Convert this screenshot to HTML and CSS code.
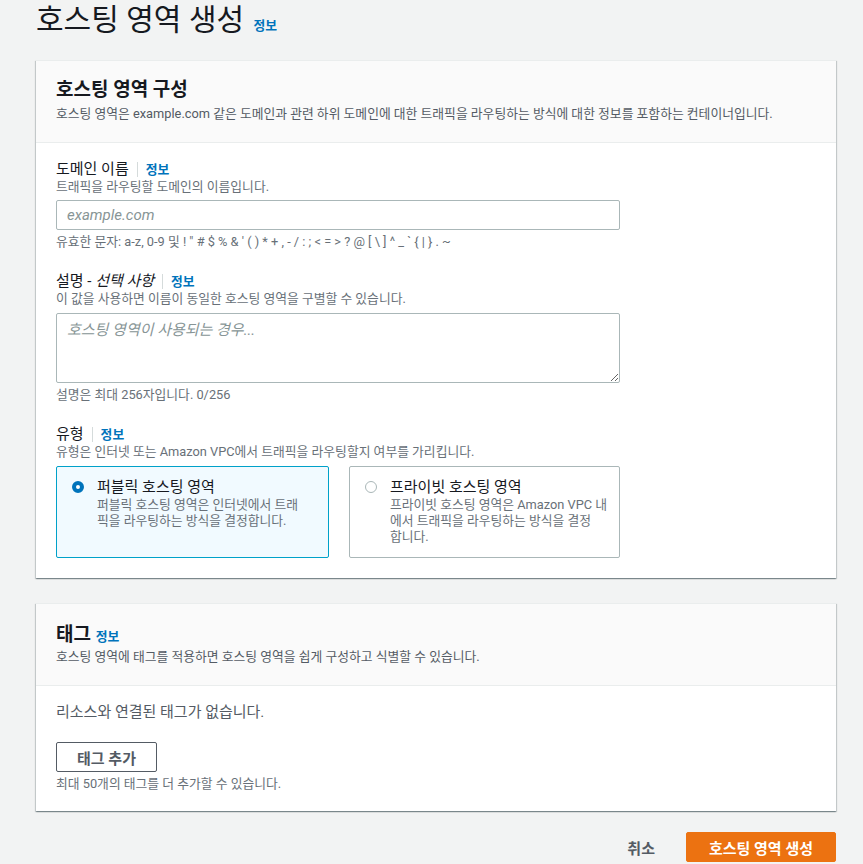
FILE: index.html
```html
<!DOCTYPE html>
<html lang="ko">
<head>
    <meta charset="UTF-8">
    <meta name="viewport" content="width=device-width, initial-scale=1.0">
    <title>호스팅 영역 생성</title>
    <link rel="stylesheet" href="styles.css">
</head>
<body>
    <div class="page">
        <h1 class="page-title">호스팅 영역 생성 <a class="info-link" href="#">정보</a></h1>

        <div class="panel">
            <div class="panel-header">
                <h2>호스팅 영역 구성</h2>
                <p class="panel-desc">호스팅 영역은 example.com 같은 도메인과 관련 하위 도메인에 대한 트래픽을 라우팅하는 방식에 대한 정보를 포함하는 컨테이너입니다.</p>
            </div>
            <div class="panel-body">
                <div class="field">
                    <div class="field-label">도메인 이름<a class="info-link sep" href="#">정보</a></div>
                    <div class="field-desc">트래픽을 라우팅할 도메인의 이름입니다.</div>
                    <input class="text-input" type="text" placeholder="example.com">
                    <div class="field-hint">유효한 문자: a-z, 0-9 및 ! " # $ % &amp; ' ( ) * + , - / : ; &lt; = &gt; ? @ [ \ ] ^ _ ` { | } . ~</div>
                </div>

                <div class="field">
                    <div class="field-label">설명 - <i>선택 사항</i><a class="info-link sep" href="#">정보</a></div>
                    <div class="field-desc">이 값을 사용하면 이름이 동일한 호스팅 영역을 구별할 수 있습니다.</div>
                    <textarea class="text-area" placeholder="호스팅 영역이 사용되는 경우..."></textarea>
                    <div class="field-hint">설명은 최대 256자입니다. 0/256</div>
                </div>

                <div class="field">
                    <div class="field-label">유형<a class="info-link sep" href="#">정보</a></div>
                    <div class="field-desc">유형은 인터넷 또는 Amazon VPC에서 트래픽을 라우팅할지 여부를 가리킵니다.</div>
                    <div class="tiles">
                        <label class="tile selected">
                            <span class="radio checked"></span>
                            <span class="tile-text">
                                <span class="tile-title">퍼블릭 호스팅 영역</span>
                                <span class="tile-desc">퍼블릭 호스팅 영역은 인터넷에서 트래<br>픽을 라우팅하는 방식을 결정합니다.</span>
                            </span>
                        </label>
                        <label class="tile">
                            <span class="radio"></span>
                            <span class="tile-text">
                                <span class="tile-title">프라이빗 호스팅 영역</span>
                                <span class="tile-desc">프라이빗 호스팅 영역은 Amazon VPC 내<br>에서 트래픽을 라우팅하는 방식을 결정<br>합니다.</span>
                            </span>
                        </label>
                    </div>
                </div>
            </div>
        </div>

        <div class="panel tags-panel">
            <div class="panel-header">
                <h2>태그 <a class="info-link" href="#">정보</a></h2>
                <p class="panel-desc">호스팅 영역에 태그를 적용하면 호스팅 영역을 쉽게 구성하고 식별할 수 있습니다.</p>
            </div>
            <div class="panel-body">
                <p class="empty-text">리소스와 연결된 태그가 없습니다.</p>
                <button class="btn">태그 추가</button>
                <div class="field-hint">최대 50개의 태그를 더 추가할 수 있습니다.</div>
            </div>
        </div>

        <div class="actions">
            <button class="btn-link">취소</button>
            <button class="btn btn-primary">호스팅 영역 생성</button>
        </div>
    </div>
</body>
</html>
```

FILE: styles.css
```css
body {
    margin: 0;
    background-color: #f2f3f3;
    font-family: Roboto, "Noto Sans CJK KR", sans-serif;
    color: #16191f;
    font-size: 15px;
}
.page {
    width: 800px;
    margin-left: 36px;
}
.page-title {
    font-size: 30px;
    font-weight: normal;
    line-height: 36px;
    margin: 2px 0 22px 0;
}
.info-link {
    font-size: 12.8px;
    font-weight: bold;
    color: #0073bb;
    text-decoration: none;
    line-height: 16px;
}
.page-title .info-link { margin-left: 2px; }
.info-link.sep {
    border-left: 1px solid #d5dbdb;
    padding-left: 8px;
    margin-left: 8px;
}

.panel {
    background: #fff;
    border-top: 1px solid #eaeded;
    box-shadow: 0 1px 1px 0 rgba(0, 28, 36, 0.3), 1px 1px 1px 0 rgba(0, 28, 36, 0.15), -1px 1px 1px 0 rgba(0, 28, 36, 0.15);
    margin-bottom: 25px;
}
.panel-header {
    background: #fafafa;
    border-bottom: 1px solid #eaeded;
    padding: 18px 20px 20px 20px;
}
.panel-header h2 {
    font-size: 19px;
    line-height: 22px;
    margin: 0;
}
.panel-desc {
    font-size: 12.8px;
    line-height: 16px;
    color: #545b64;
    margin: 5px 0 0 0;
}
.tags-panel .panel-header h2 { margin-top: 2px; }
.tags-panel .panel-desc { margin-top: 3px; }
.panel-body {
    padding: 16px 20px 20px 20px;
}

.field { margin-bottom: 21px; }
.field:last-child { margin-bottom: 0; }
.field-label {
    font-size: 15px;
    line-height: 20px;
}
.field-label i { font-style: italic; }
.field-desc,
.field-hint {
    font-size: 12.8px;
    line-height: 16px;
    color: #687078;
}
.field-hint { margin-top: 4px; }
.text-input,
.text-area {
    display: block;
    box-sizing: border-box;
    width: 564px;
    margin-top: 5px;
    border: 1px solid #aab7b8;
    border-radius: 2px;
    font-family: inherit;
    font-size: 15px;
    padding: 4px 10px;
    background: #fff;
}
.text-input { height: 30px; }
.text-area {
    height: 70px;
    margin-top: 6px;
    resize: vertical;
}
.text-input::placeholder,
.text-area::placeholder {
    color: #879596;
    font-style: italic;
}

.tiles {
    display: grid;
    grid-template-columns: 273px 271px;
    gap: 20px;
    margin-top: 6px;
}
.tile {
    display: flex;
    align-items: flex-start;
    gap: 13px;
    border: 1px solid #aab7b8;
    border-radius: 2px;
    padding: 10px 8px 12px 15px;
    background: #fff;
}
.tile.selected {
    border-color: #00a1c9;
    background: #f1faff;
}
.radio {
    flex: none;
    box-sizing: border-box;
    width: 12px;
    height: 12px;
    margin-top: 4px;
    border-radius: 50%;
    border: 1px solid #aab7b8;
    background: #fff;
}
.radio.checked {
    border: 4px solid #0073bb;
}
.tile-text {
    display: flex;
    flex-direction: column;
}
.tile-title {
    font-size: 15px;
    line-height: 20px;
}
.tile-desc {
    font-size: 12.8px;
    line-height: 16px;
    color: #687078;
}

.tags-panel .panel-body { padding: 16px 20px 19px 20px; }
.empty-text {
    margin: 0 0 20px 0;
    line-height: 20px;
    color: #545b64;
}
.btn {
    box-sizing: border-box;
    height: 30px;
    padding: 4px 20px;
    border: 1px solid #545b64;
    border-radius: 2px;
    background: #fff;
    color: #545b64;
    font-family: inherit;
    font-size: 15px;
    font-weight: bold;
}
.actions {
    display: flex;
    justify-content: flex-end;
    align-items: center;
    gap: 11px;
    margin-top: -4px;
}
.btn-link {
    border: none;
    background: none;
    padding: 4px 20px;
    font-family: inherit;
    font-size: 15px;
    font-weight: bold;
    color: #545b64;
}
.btn-primary {
    background: #ec7211;
    border-color: #ec7211;
    color: #fff;
    padding: 4px 22px;
}
```
